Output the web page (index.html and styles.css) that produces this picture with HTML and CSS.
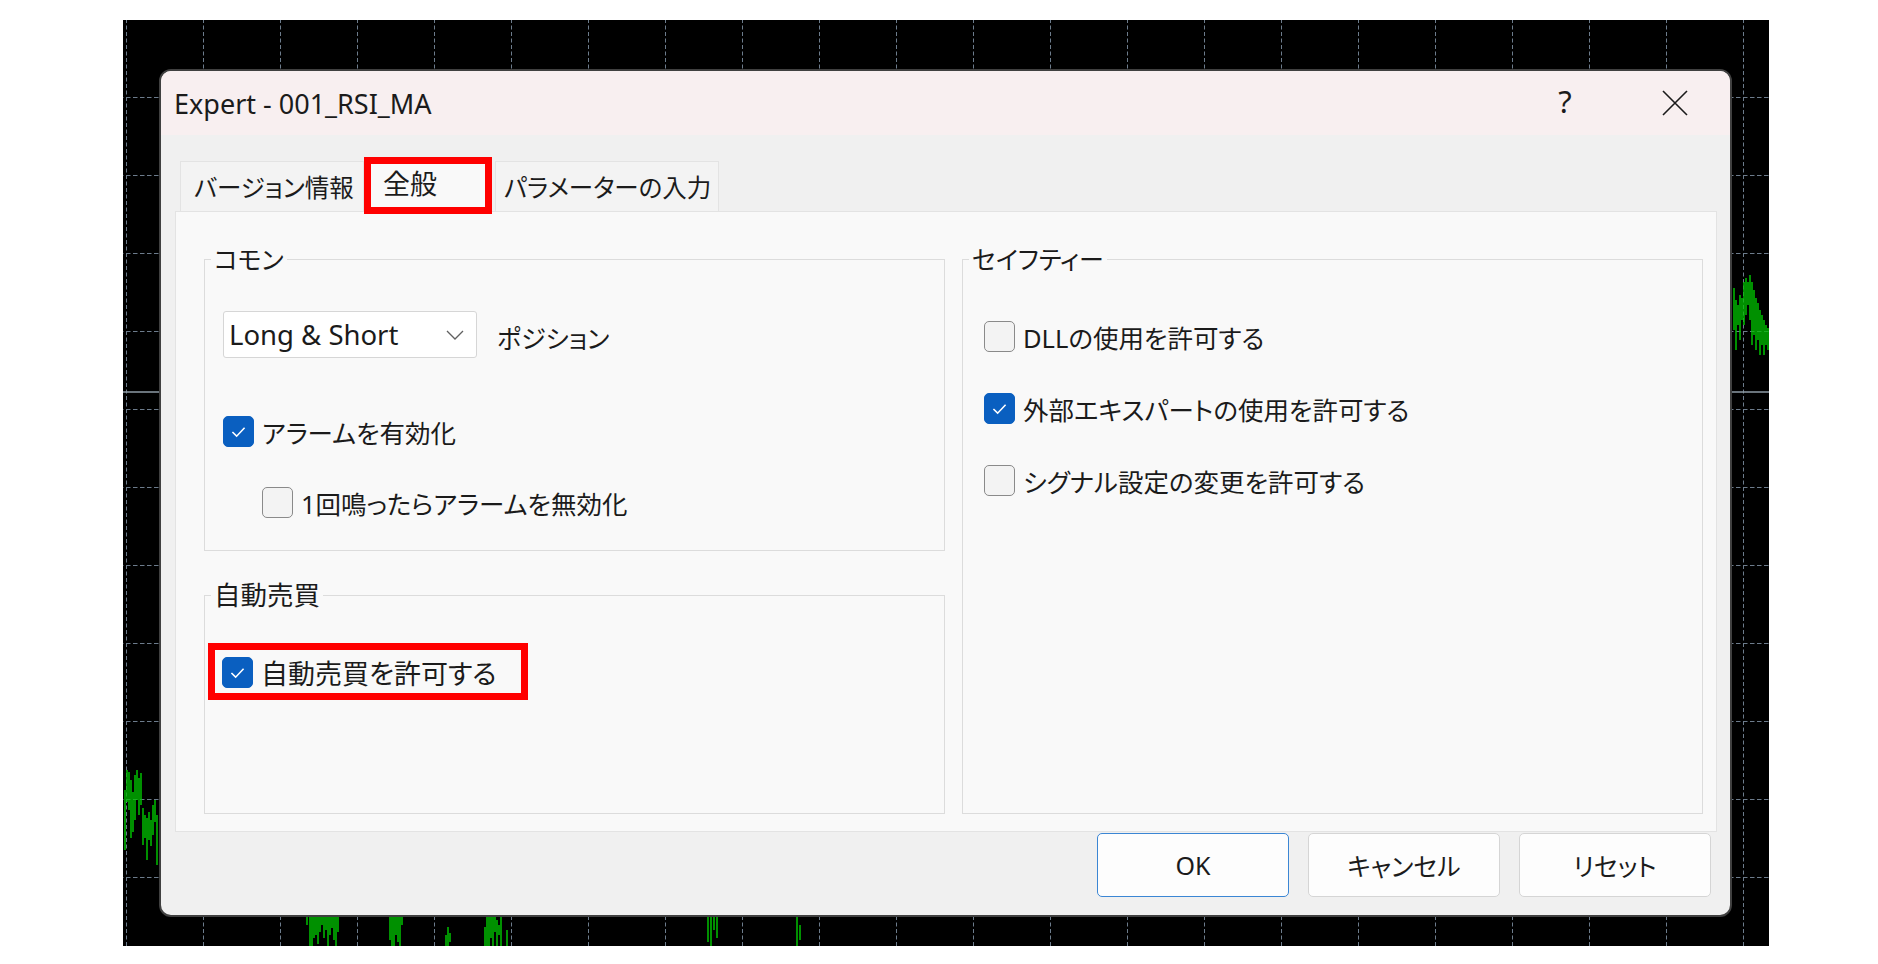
FILE: index.html
```html
<!DOCTYPE html>
<html lang="ja">
<head>
<meta charset="UTF-8" />
<meta name="viewport" content="width=device-width, initial-scale=1.0"/>
<title>Expert - 001_RSI_MA</title>
<link rel="stylesheet" href="styles.css">
</head>
<body>
<div class="screen">
    <svg class="chart" width="1646" height="926" viewBox="0 0 1646 926">
        <defs>
            <pattern id="grid" x="3" y="77" width="77" height="78" patternUnits="userSpaceOnUse">
                <line x1="0.5" y1="0" x2="0.5" y2="78" class="grid-v"/>
                <line x1="0" y1="0.5" x2="77" y2="0.5" class="grid-h"/>
            </pattern>
        </defs>
        <rect width="1646" height="926" fill="url(#grid)"/>
        <line x1="0" y1="372" x2="1646" y2="372" class="price-line"/>
        <path class="bars" d="M2 770V830M4 750V782M6 752V790M8 760V818M10 772V812M12 755V800M14 750V780M16 758V795M18 753V785M20 788V825M22 795V818M24 798V840M26 792V820M28 800V826M30 785V815M32 780V802M34 795V845
            M1611 268V310M1613 280V330M1615 285V305M1617 275V320M1619 278V300M1621 262V305M1623 258V295M1625 262V285M1627 255V300M1629 262V325M1631 270V315M1633 278V330M1635 283V320M1637 290V335M1639 295V325M1641 300V335M1643 305V325M1645 308V330
            M184 897V905M187 897V926M189 897V926M191 897V918M193 897V915M195 897V924M197 897V912M199 897V905M201 897V918M203 897V910M205 897V926M207 897V915M209 897V908M211 897V920M213 897V926M215 897V912
            M267 897V920M269 897V926M271 897V926M273 897V915M275 897V922M277 897V926M279 897V905
            M323 915V926M325 907V926M327 913V922
            M362 907V926M364 897V926M366 897V926M368 897V918M370 897V926M372 897V912M374 900V926M376 905V915M378 897V926M384 910V926
            M585 897V922M588 897V926M591 897V910M594 897V918M674 897V926M677 905V920"/>
    </svg>

    <div class="dialog">
        <div class="titlebar">
            <span class="title">Expert - 001_RSI_MA</span>
            <div class="caption">
                <span class="help">?</span>
                <span class="close">
                    <svg width="26" height="26" viewBox="0 0 26 26"><path d="M1 1L25 25M25 1L1 25"/></svg>
                </span>
            </div>
        </div>

        <div class="body">
            <div class="tabs">
                <div class="tab tab-info">バージョン情報</div>
                <div class="tab active">全般</div>
                <div class="tab tab-params">パラメーターの入力</div>
            </div>

            <div class="panel">
                <div class="col-left">
                    <div class="group common">
                        <span class="legend">コモン</span>
                        <div class="combo-row">
                            <div class="combo">
                                <span>Long &amp; Short</span>
                                <svg width="18" height="10" viewBox="0 0 18 10"><path d="M1 1L9 9L17 1"/></svg>
                            </div>
                            <span class="combo-label">ポジション</span>
                        </div>
                        <div class="check first">
                            <span class="box on"><svg viewBox="0 0 31 31"><path d="M9 16L13.5 20.5L22 11.5"/></svg></span>
                            <span>アラームを有効化</span>
                        </div>
                        <div class="check sub">
                            <span class="box"></span>
                            <span>1回鳴ったらアラームを無効化</span>
                        </div>
                    </div>

                    <div class="group auto">
                        <span class="legend">自動売買</span>
                        <div class="highlight">
                            <div class="check">
                                <span class="box on"><svg viewBox="0 0 31 31"><path d="M9 16L13.5 20.5L22 11.5"/></svg></span>
                                <span>自動売買を許可する</span>
                            </div>
                        </div>
                    </div>
                </div>

                <div class="group safety">
                    <span class="legend">セイフティー</span>
                    <div class="check">
                        <span class="box"></span>
                        <span>DLLの使用を許可する</span>
                    </div>
                    <div class="check">
                        <span class="box on"><svg viewBox="0 0 31 31"><path d="M9 16L13.5 20.5L22 11.5"/></svg></span>
                        <span>外部エキスパートの使用を許可する</span>
                    </div>
                    <div class="check">
                        <span class="box"></span>
                        <span>シグナル設定の変更を許可する</span>
                    </div>
                </div>
            </div>

            <div class="actions">
                <button class="btn default">OK</button>
                <button class="btn">キャンセル</button>
                <button class="btn">リセット</button>
            </div>
        </div>
    </div>
</div>
</body>
</html>
```

FILE: styles.css
```css
* {
    box-sizing: border-box;
}

body {
    margin: 0;
    background: #fff;
    font-family: "Noto Sans", "Noto Sans CJK JP", sans-serif;
    font-feature-settings: "palt";
    color: #1b1b1b;
}

.screen {
    position: relative;
    width: 1878px;
    height: 964px;
    overflow: hidden;
}

/* chart behind the dialog */
.chart {
    position: absolute;
    left: 123px;
    top: 20px;
    background: #000;
}

.grid-v {
    stroke: #6d7c8c;
    stroke-width: 1;
    stroke-dasharray: 4 2.5;
}

.grid-h {
    stroke: #6d7c8c;
    stroke-width: 1;
    stroke-dasharray: 4.5 2.5;
}

.price-line {
    stroke: #8e9ba6;
    stroke-width: 1.5;
}

.bars {
    stroke: #00c000;
    stroke-width: 1.5;
    fill: none;
}

/* dialog window */
.dialog {
    position: absolute;
    left: 159px;
    top: 69px;
    width: 1573px;
    height: 848px;
    border: 2px solid #404040;
    border-radius: 12px;
    background: #f0f0f0;
    overflow: hidden;
    display: flex;
    flex-direction: column;
}

.titlebar {
    height: 64px;
    flex: none;
    background: #f8eff0;
    display: flex;
    align-items: center;
    justify-content: space-between;
    padding-left: 13px;
}

.title {
    font-size: 27px;
}

.caption {
    display: flex;
    height: 100%;
}

.caption span {
    width: 110px;
    display: flex;
    align-items: center;
    justify-content: center;
}

.help {
    font-size: 31px;
    margin-top: -4px;
}

.close path {
    stroke: #1b1b1b;
    stroke-width: 1.6;
    fill: none;
}

.body {
    flex: 1;
    padding: 22px 13px 0 14px;
    display: flex;
    flex-direction: column;
}

/* tabs */
.tabs {
    display: flex;
    align-items: flex-end;
    height: 54px;
    padding-left: 5px;
}

.tab {
    height: 50px;
    border: 1px solid #e3e3e3;
    border-bottom: 0;
    background: #f3f3f3;
    font-size: 24.5px;
    display: flex;
    align-items: center;
    white-space: nowrap;
}

.tab-info {
    width: 184px;
    padding-left: 13px;
}

.tab-params {
    width: 224px;
    padding-left: 8px;
}

.tab.active {
    position: relative;
    z-index: 1;
    width: 128px;
    height: 57px;
    margin-bottom: -3px;
    margin-right: 3px;
    border: 7px solid #f00;
    background: #f9f9f9;
    padding: 0 0 6px 12px;
    font-size: 27px;
}

/* main panel */
.panel {
    height: 621px;
    background: #f9f9f9;
    border: 1px solid #e3e3e3;
    padding: 47px 13px 17px 28px;
    display: flex;
    gap: 17px;
}

.col-left {
    width: 741px;
    display: flex;
    flex-direction: column;
    gap: 44px;
}

.group {
    position: relative;
    border: 1px solid #dcdcdc;
}

.legend {
    position: absolute;
    top: -16px;
    left: 6px;
    padding: 0 3px;
    background: #f9f9f9;
    font-size: 25px;
    line-height: 30px;
}

.auto .legend {
    font-size: 26.5px;
}

.common {
    height: 292px;
    padding: 51px 0 0 18px;
}

.auto {
    flex: 1;
    padding: 58px 0 0 18px;
}

.safety {
    width: 741px;
    padding: 58px 0 0 21px;
    display: flex;
    flex-direction: column;
    gap: 36px;
}

.combo-row {
    display: flex;
    align-items: center;
    gap: 20px;
    height: 47px;
}

.combo {
    width: 254px;
    height: 47px;
    background: #fff;
    border: 1px solid #d6d6d6;
    border-radius: 3px;
    display: flex;
    align-items: center;
    justify-content: space-between;
    padding: 0 12px 0 5px;
    font-size: 27.5px;
}

.combo path {
    stroke: #606060;
    stroke-width: 1.3;
    fill: none;
}

.combo-label {
    font-size: 25px;
    margin-top: 5px;
}

.check {
    display: flex;
    align-items: center;
    gap: 8px;
    height: 36px;
    font-size: 25.5px;
    white-space: nowrap;
}

.check.first {
    margin-top: 55px;
}

.check.sub {
    margin-top: 35px;
    margin-left: 39px;
}

.box {
    flex: none;
    width: 31px;
    height: 31px;
    border-radius: 5px;
    border: 1.5px solid #8a8a8a;
    background: #f3f3f3;
}

.box.on {
    background: #0a5fc0;
    border-color: #0a5fc0;
}

.box svg {
    display: block;
    width: 100%;
    height: 100%;
}

.box path {
    stroke: #fff;
    stroke-width: 1.7;
    fill: none;
}

.highlight {
    width: 306px;
    height: 43px;
    margin: -4px 0 0 -8px;
    padding: 4px 0 3px 8px;
    outline: 7px solid #f00;
}

.highlight .check {
    margin-left: -1px;
    font-size: 27px;
}

/* bottom buttons */
.actions {
    display: flex;
    justify-content: flex-end;
    gap: 19px;
    margin-top: 1px;
    padding-right: 6px;
}

.btn {
    width: 192px;
    height: 64px;
    background: #fdfdfd;
    border: 1px solid #d5d5d5;
    border-radius: 5px;
    font-family: inherit;
    font-feature-settings: "palt";
    font-size: 25px;
    color: #1b1b1b;
}

.btn.default {
    border-color: #3b86d4;
}
```
